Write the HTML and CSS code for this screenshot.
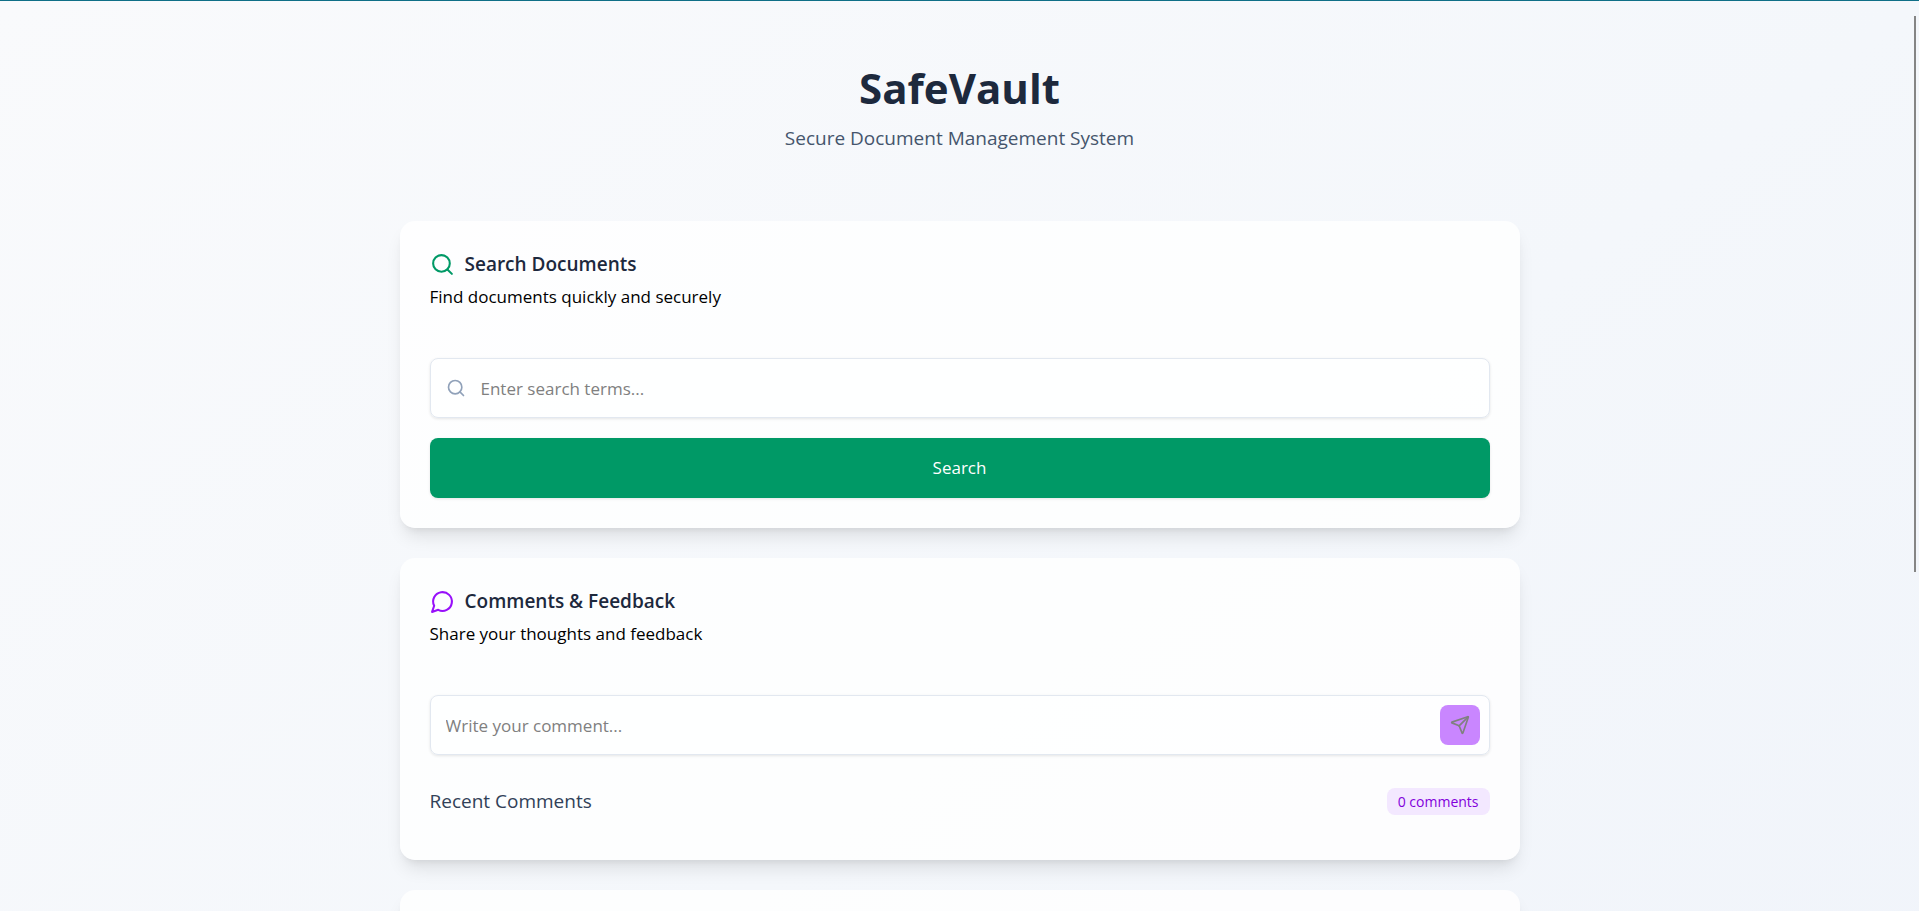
FILE: index.html
```html
<!DOCTYPE html>
<html lang="en">
<head>
<meta charset="utf-8">
<meta name="viewport" content="width=device-width, initial-scale=1">
<title>SafeVault</title>
<link rel="stylesheet" href="styles.css">
</head>
<body>
<div class="page">
  <header class="hero">
    <h1 class="hero-title">SafeVault</h1>
    <p class="hero-subtitle">Secure Document Management System</p>
  </header>
  <main class="stack">
    <section class="card">
      <div class="card-header">
        <h2 class="card-title">
          <svg class="icon icon-green" viewBox="0 0 24 24" aria-hidden="true"><circle cx="11" cy="11" r="8"/><path d="m21 21-4.3-4.3"/></svg>
          Search Documents
        </h2>
        <p class="card-text">Find documents quickly and securely</p>
      </div>
      <form class="search-form">
        <label class="field">
          <svg class="field-icon" viewBox="0 0 24 24" aria-hidden="true"><circle cx="11" cy="11" r="8"/><path d="m21 21-4.3-4.3"/></svg>
          <input class="field-input" type="text" placeholder="Enter search terms..." aria-label="Search terms">
        </label>
        <button class="search-button" type="button">Search</button>
      </form>
    </section>
    <section class="card">
      <div class="card-header">
        <h2 class="card-title">
          <svg class="icon icon-purple" viewBox="0 0 24 24" aria-hidden="true"><path d="M7.9 20A9 9 0 1 0 4 16.1L2 22Z"/></svg>
          Comments &amp; Feedback
        </h2>
        <p class="card-text">Share your thoughts and feedback</p>
      </div>
      <form class="field">
        <input class="field-input" type="text" placeholder="Write your comment..." aria-label="Comment">
        <button class="send-button" type="button" aria-label="Send comment" disabled>
          <svg class="send-icon" viewBox="0 0 24 24" aria-hidden="true"><path d="M14.536 21.686a.5.5 0 0 0 .937-.024l6.5-19a.496.496 0 0 0-.635-.635l-19 6.5a.5.5 0 0 0-.024.937l7.93 3.18a2 2 0 0 1 1.112 1.11z"/><path d="m21.854 2.147-10.94 10.939"/></svg>
        </button>
      </form>
      <div class="recent">
        <h3 class="recent-title">Recent Comments</h3>
        <span class="badge">0 comments</span>
      </div>
    </section>
    <section class="card card-next"></section>
  </main>
</div>
<div class="top-line"></div>
<div class="scroll-thumb"></div>
</body>
</html>
```
FILE: styles.css
```css
* { box-sizing: border-box; }
html { scrollbar-width: none; }
body {
  margin: 0;
  font-family: "Segoe UI", "Open Sans", "Noto Sans", sans-serif;
  font-size: 17px;
  line-height: 24px;
  color: #000;
}
h1, h2, h3, p { margin: 0; }
button, input { font: inherit; }
.page {
  padding: 58px 20px;
  background: linear-gradient(to bottom right, #f9fafc, #f4f7fb 50%, #eff3fa);
}
.hero { text-align: center; margin-bottom: 69px; }
.hero-title {
  font-size: 42px;
  line-height: 60px;
  font-weight: 700;
  color: #1d293d;
}
.hero-subtitle {
  margin-top: 6px;
  font-size: 19px;
  line-height: 28px;
  color: #45556c;
}
.stack {
  display: grid;
  gap: 30px;
  max-width: 1120px;
  margin: 0 auto;
}
.card {
  padding: 30px;
  border-radius: 15px;
  background: rgba(255, 255, 255, 0.8);
  box-shadow: 0 12px 18px -4px rgba(0, 0, 0, 0.1), 0 5px 8px -5px rgba(0, 0, 0, 0.1);
}
.card-next { min-height: 520px; }
.card-header { margin-bottom: 49px; }
.card-title {
  display: flex;
  align-items: center;
  gap: 10px;
  font-size: 19px;
  line-height: 27px;
  font-weight: 600;
  color: #1d293d;
}
.card-text { margin-top: 7px; }
.icon {
  width: 25px;
  height: 25px;
  fill: none;
  stroke: currentColor;
  stroke-width: 2;
  stroke-linecap: round;
  stroke-linejoin: round;
}
.icon-green { color: #009966; }
.icon-purple { color: #9810fa; }
.search-form { display: grid; gap: 20px; }
.field {
  display: flex;
  align-items: center;
  height: 60px;
  padding: 0 9px 0 15px;
  border: 1px solid #e2e8f0;
  border-radius: 8px;
  background: rgba(255, 255, 255, 0.5);
  box-shadow: 0 1px 3px rgba(0, 0, 0, 0.1);
}
.field-icon {
  flex: none;
  width: 20px;
  height: 20px;
  margin-right: 15px;
  fill: none;
  stroke: #90a1b9;
  stroke-width: 2;
  stroke-linecap: round;
  stroke-linejoin: round;
}
.field-input {
  flex: 1;
  min-width: 0;
  padding: 2px 0 0;
  border: 0;
  outline: 0;
  background: transparent;
}
.field-input::placeholder { color: #808080; opacity: 1; }
.search-button {
  height: 60px;
  border: 0;
  border-radius: 8px;
  background: #009966;
  color: #fff;
  box-shadow: 0 1px 3px rgba(0, 0, 0, 0.1);
}
.send-button {
  display: grid;
  place-items: center;
  width: 40px;
  height: 40px;
  padding: 0;
  border: 0;
  border-radius: 8px;
  background: #c986ff;
}
.send-icon {
  width: 20px;
  height: 20px;
  fill: none;
  stroke: #808080;
  stroke-width: 2;
  stroke-linecap: round;
  stroke-linejoin: round;
}
.recent {
  display: flex;
  justify-content: space-between;
  align-items: center;
  margin: 31px 0 13px;
}
.recent-title {
  font-size: 19px;
  line-height: 31px;
  font-weight: 400;
  color: #314158;
}
.badge {
  padding: 2px 11px;
  border-radius: 8px;
  background: #f3e8ff;
  font-size: 14px;
  line-height: 23px;
  color: #8200db;
}
.top-line {
  position: fixed;
  inset: 0 0 auto;
  height: 1px;
  background: #0f6f87;
}
.scroll-thumb {
  position: fixed;
  top: 16px;
  right: 3px;
  width: 2px;
  height: 61vh;
  background: #858585;
}
```
